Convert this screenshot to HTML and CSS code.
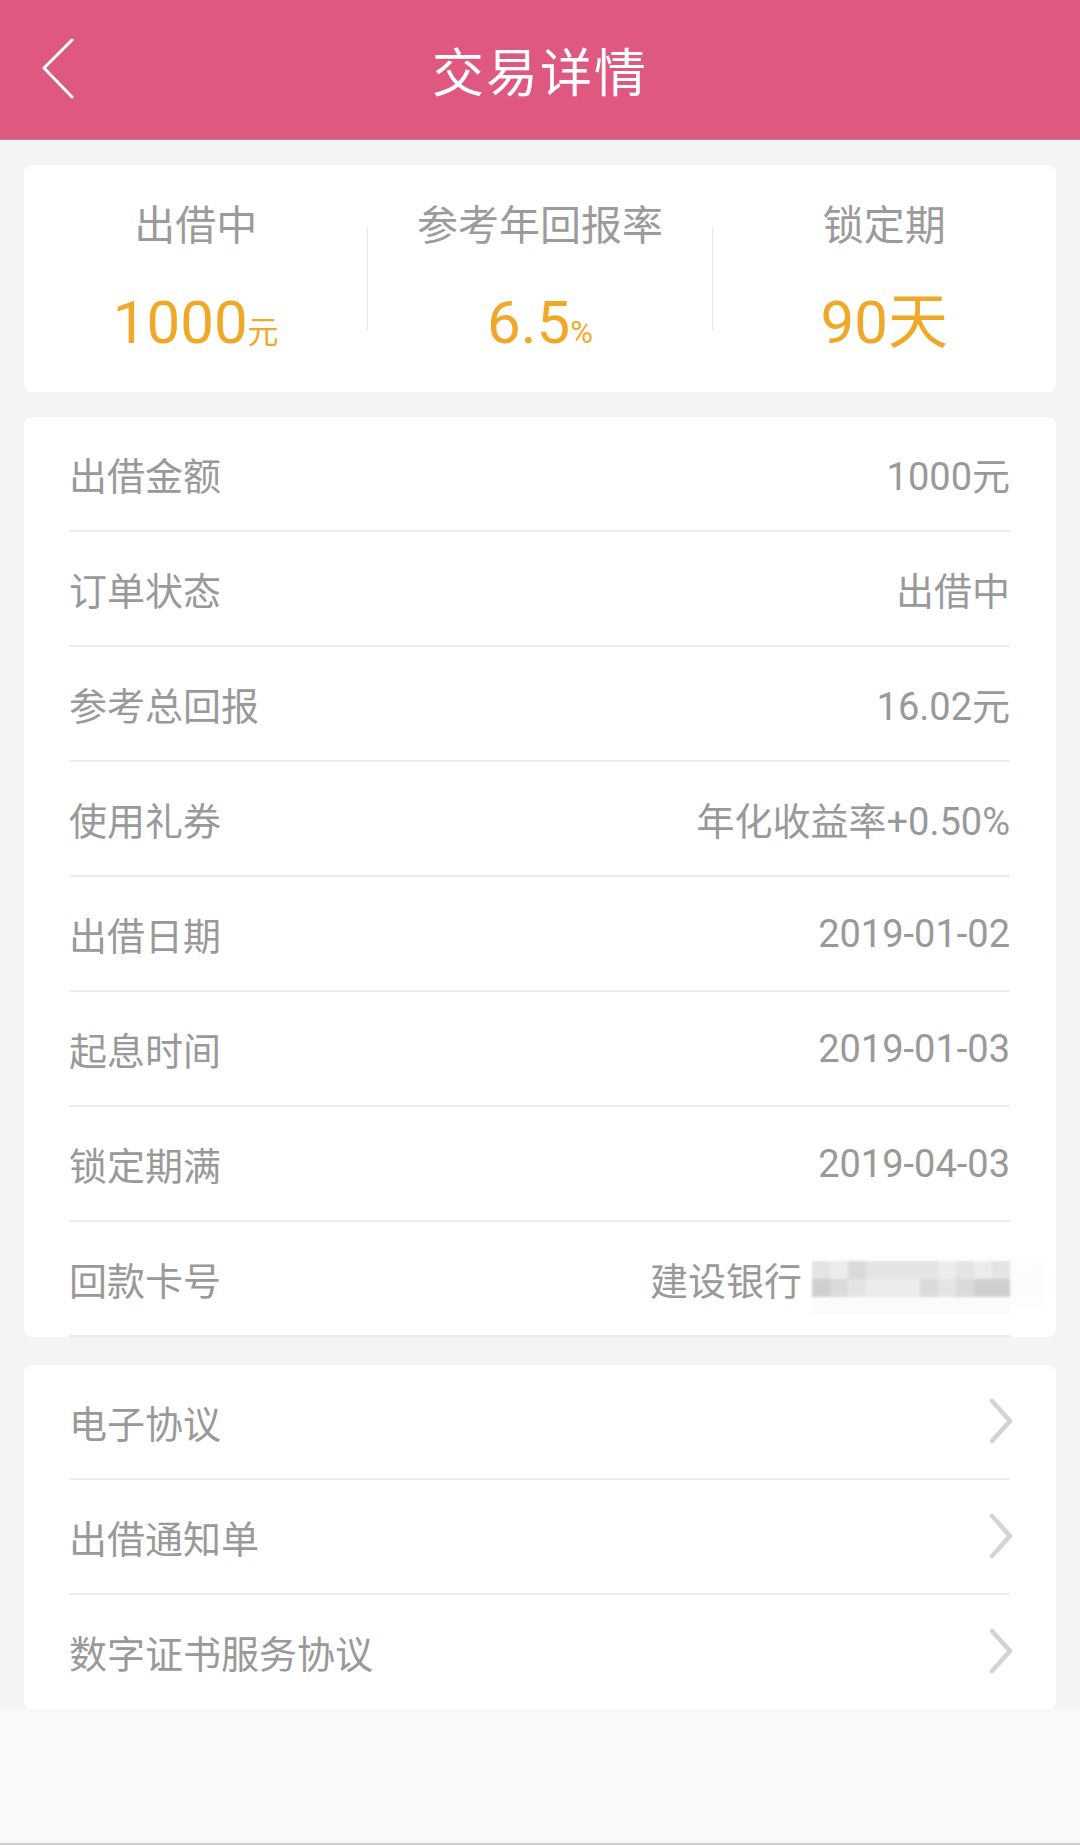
FILE: index.html
```html
<!DOCTYPE html>
<html lang="zh-CN">
<head>
    <meta charset="UTF-8">
    <meta name="viewport" content="width=device-width, initial-scale=1.0">
    <title>交易详情</title>
    <link rel="stylesheet" href="styles.css">
</head>
<body>
    <div class="page">
        <header class="topbar">
            <svg class="back" width="40" height="70" viewBox="0 0 40 70">
                <polyline points="30,3 2,31 30,60" />
            </svg>
            <h1>交易详情</h1>
        </header>
        <main class="main">
            <section class="summary">
                <div class="stat">
                    <span class="stat-label">出借中</span>
                    <span class="stat-value">1000<small>元</small></span>
                </div>
                <div class="stat-divider"></div>
                <div class="stat">
                    <span class="stat-label">参考年回报率</span>
                    <span class="stat-value">6.5<small>%</small></span>
                </div>
                <div class="stat-divider"></div>
                <div class="stat">
                    <span class="stat-label">锁定期</span>
                    <span class="stat-value">90天</span>
                </div>
            </section>

            <ul class="card details" role="list">
                <li class="row"><span>出借金额</span><span>1000元</span></li>
                <li class="row"><span>订单状态</span><span>出借中</span></li>
                <li class="row"><span>参考总回报</span><span>16.02元</span></li>
                <li class="row"><span>使用礼券</span><span>年化收益率+0.50%</span></li>
                <li class="row"><span>出借日期</span><span>2019-01-02</span></li>
                <li class="row"><span>起息时间</span><span>2019-01-03</span></li>
                <li class="row"><span>锁定期满</span><span>2019-04-03</span></li>
                <li class="row">
                    <span>回款卡号</span>
                    <span class="bank">建设银行<span class="masked">
                        <i class="m2"></i><i class="m1"></i><i class="m3"></i><i class="m2"></i><i class="m2"></i><i class="m2"></i><i class="m2"></i><i class="m1"></i><i class="m2"></i><i class="m1"></i><i class="m2"></i>
                        <i class="m4"></i><i class="m3"></i><i class="m2"></i><i class="m1"></i><i class="m1"></i><i class="m1"></i><i class="m3"></i><i class="m2"></i><i class="m3"></i><i class="m4"></i><i class="m4"></i>
                    </span></span>
                </li>
            </ul>

            <ul class="card links" role="list">
                <li class="row"><span>电子协议</span><svg class="chevron" width="30" height="50" viewBox="0 0 30 50"><polyline points="4,4 22,24 4,44" /></svg></li>
                <li class="row"><span>出借通知单</span><svg class="chevron" width="30" height="50" viewBox="0 0 30 50"><polyline points="4,4 22,24 4,44" /></svg></li>
                <li class="row"><span>数字证书服务协议</span><svg class="chevron" width="30" height="50" viewBox="0 0 30 50"><polyline points="4,4 22,24 4,44" /></svg></li>
            </ul>
        </main>
        <footer class="bottom"></footer>
    </div>
</body>
</html>
```

FILE: styles.css
```css
body {
    margin: 0;
    background-color: #f4f4f4;
    font-family: Roboto, "Noto Sans CJK SC", sans-serif;
    color: #999;
}
.page {
    width: 1080px;
    height: 1845px;
    display: flex;
    flex-flow: column;
}
.topbar {
    height: 139px;
    flex: none;
    border-bottom: 1px solid #c08a9b;
    background-color: #de5880;
    display: flex;
    align-items: center;
    justify-content: center;
    position: relative;
}
.topbar h1 {
    margin: 0;
    font-size: 52px;
    font-weight: 400;
    color: #fff;
    letter-spacing: 2px;
}
.back {
    position: absolute;
    left: 42px;
    top: 37px;
    polyline {
        fill: none;
        stroke: #fff;
        stroke-width: 3;
        stroke-linecap: round;
        stroke-linejoin: round;
    }
}
.main {
    height: 1569px;
    flex: none;
    overflow: hidden;
    padding: 25px 24px 0;
    box-sizing: border-box;
}
.summary {
    height: 227px;
    background-color: #fff;
    border-radius: 8px;
    display: grid;
    grid-template-columns: 1fr 1px 1fr 1px 1fr;
    align-items: start;
}
.stat {
    display: flex;
    flex-flow: column;
    align-items: center;
    padding-top: 36px;
}
.stat-label {
    font-size: 41px;
    line-height: 50px;
    color: #9b9b9b;
}
.stat-value {
    margin-top: 37px;
    font-size: 60px;
    line-height: 70px;
    color: #f0a828;
    small {
        font-size: 31px;
    }
}
.stat-divider {
    margin-top: 62px;
    height: 103px;
    background-color: #e6e6e6;
}
.card {
    list-style-type: none;
    margin: 25px 0 0;
    padding: 0 46px 0 45px;
    background-color: #fff;
    border-radius: 8px;
}
.links {
    margin-top: 30px;
    .row:last-child {
        border-bottom-color: transparent;
    }
}
.row {
    height: 113px;
    border-bottom: 2px solid #ececec;
    display: flex;
    align-items: center;
    justify-content: space-between;
    font-size: 38px;
    color: #999;
}
.details .row:last-child {
    margin-bottom: -2px;
}
.bank {
    display: flex;
    align-items: center;
    gap: 10px;
}
.masked {
    display: grid;
    grid-template-columns: repeat(11, 18px);
    grid-auto-rows: 18px;
    filter: blur(1px);
    box-shadow: 0 18px 0 0 #fbfbfb, 30px 4px 10px 6px #fcfcfc;
    i {
        display: block;
    }
}
.m1 { background-color: #ececec; }
.m2 { background-color: #e4e4e4; }
.m3 { background-color: #dadada; }
.m4 { background-color: #cfcfcf; }
.chevron {
    margin-right: -8px;
    polyline {
        fill: none;
        stroke: #d3d3d3;
        stroke-width: 4.5;
        stroke-linecap: round;
        stroke-linejoin: round;
    }
}
.bottom {
    flex: 1;
    background-color: #f9f9f9;
    border-bottom: 2px solid #cfcfcf;
}
```
